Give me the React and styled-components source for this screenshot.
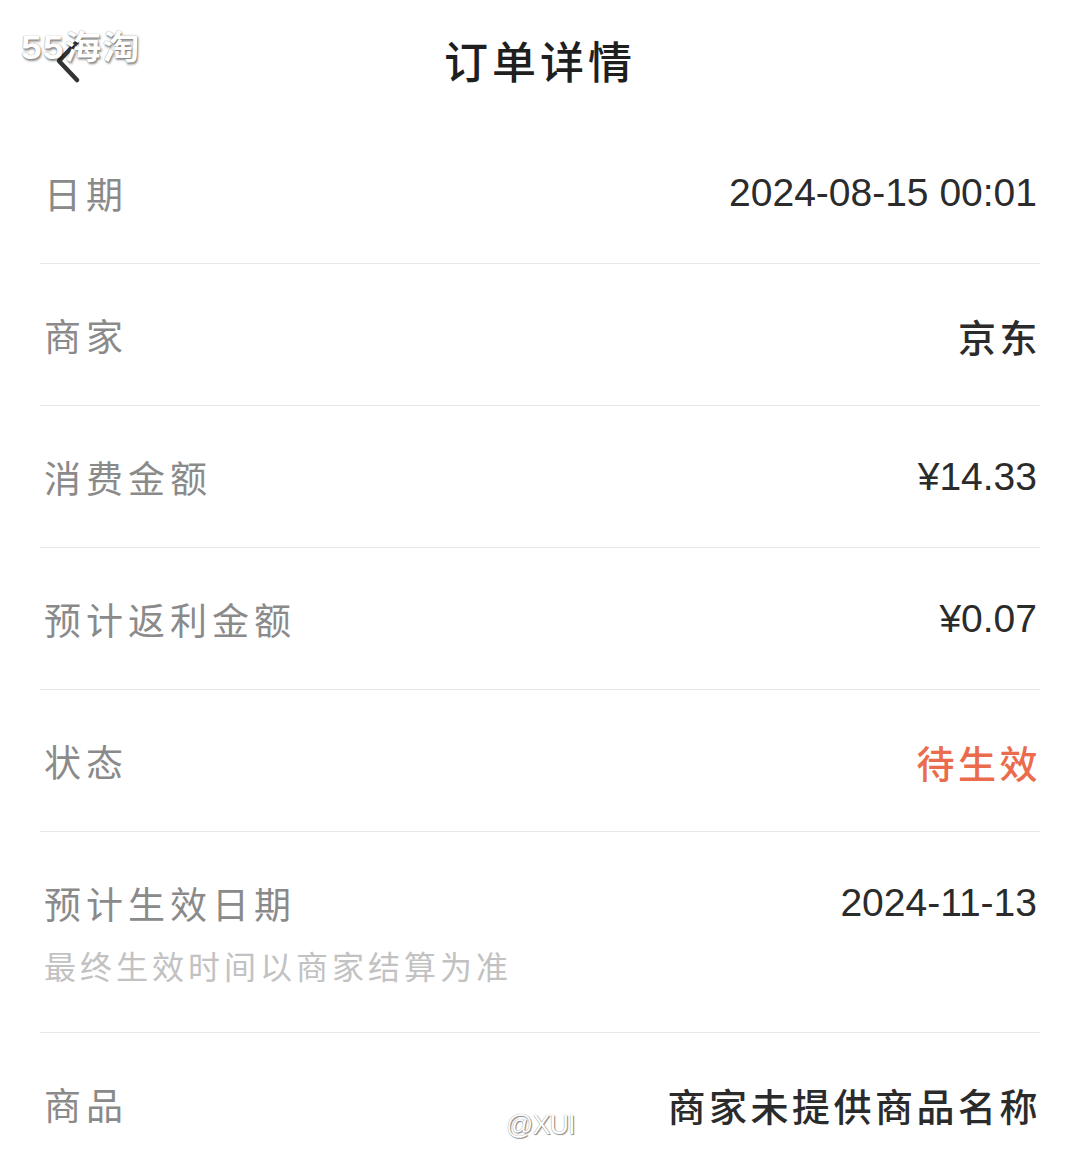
import React from 'react';
import styled, { createGlobalStyle } from 'styled-components';

const GlobalStyle = createGlobalStyle`
  body {
    margin: 0;
    background: #fff;
    font-family: "Liberation Sans", "Noto Sans CJK SC", sans-serif;
  }
`;

const rows = [
  { label: '日期', value: '2024-08-15 00:01' },
  { label: '商家', value: '京东', cjk: true },
  { label: '消费金额', value: '¥14.33' },
  { label: '预计返利金额', value: '¥0.07' },
  { label: '状态', value: '待生效', tone: 'warn', cjk: true },
  { label: '预计生效日期', value: '2024-11-13', note: '最终生效时间以商家结算为准' },
  { label: '商品', value: '商家未提供商品名称', cjk: true, last: true },
];

const App = () => (
  <Page>
    <GlobalStyle />
    <Header>
      <BackButton aria-label="返回">
        <svg width="40" height="48" viewBox="0 0 40 48">
          <path d="M26 5 L8 24 L26 43" fill="none" stroke="#333" strokeWidth="4.5" strokeLinecap="round" strokeLinejoin="round" />
        </svg>
      </BackButton>
      <Title>订单详情</Title>
    </Header>
    <List>
      {rows.map(r => (
        <Row key={r.label} tall={!!r.note} last={r.last}>
          <Main>
            <Label>{r.label}</Label>
            <Value tone={r.tone} cjk={r.cjk}>{r.value}</Value>
          </Main>
          {r.note && <Note>{r.note}</Note>}
        </Row>
      ))}
    </List>
    <Mark>55海淘</Mark>
    <Credit>@XUI</Credit>
  </Page>
);

export default App;

const Page = styled.div`
  position: relative;
  width: 1080px;
  height: 1169px;
  overflow: hidden;
  background: #fff;
`;

const Header = styled.div`
  position: relative;
  height: 122px;
  display: flex;
  justify-content: center;
  align-items: flex-start;
`;

const BackButton = styled.div`
  position: absolute;
  left: 51px;
  top: 37px;
  display: flex;
`;

const Title = styled.div`
  margin-top: 30px;
  font-family: "Noto Sans CJK SC", sans-serif;
  font-size: 44px;
  font-weight: 500;
  letter-spacing: 4px;
  color: #1f1f1f;
  line-height: 60px;
`;

const List = styled.div`
  display: flex;
  flex-direction: column;
  padding: 0 40px;
`;

const Row = styled.div`
  height: ${p => (p.tall ? 201 : 142)}px;
  box-sizing: border-box;
  border-bottom: ${p => (p.last ? 'none' : '1.5px solid #e8e8e8')};
  display: flex;
  flex-direction: column;
  padding-top: 48px;
`;

const Main = styled.div`
  display: flex;
  justify-content: space-between;
  align-items: center;
  height: 46px;
`;

const Label = styled.div`
  padding-left: 4px;
  font-family: "Noto Sans CJK SC", sans-serif;
  font-size: 37px;
  letter-spacing: 5px;
  color: #8a8a8a;
`;

const Value = styled.div`
  font-family: ${p => (p.cjk ? '"Noto Sans CJK SC", sans-serif' : '"Liberation Sans", sans-serif')};
  font-size: ${p => (p.cjk ? 38 : 39)}px;
  letter-spacing: ${p => (p.cjk ? 3.5 : 0)}px;
  color: ${p => (p.tone === 'warn' ? '#ea6c4c' : '#2b2b2b')};
  font-weight: ${p => (p.cjk ? 500 : 400)};
  margin-right: ${p => (p.cjk ? -1 : 3)}px;
`;

const Note = styled.div`
  margin-top: 16px;
  padding-left: 4px;
  font-family: "Noto Sans CJK SC", sans-serif;
  font-size: 32px;
  letter-spacing: 4px;
  color: #c2c2c2;
`;

const Mark = styled.div`
  position: absolute;
  left: 21px;
  top: 21px;
  font-family: "Liberation Sans", "Noto Sans CJK SC", sans-serif;
  font-size: 33px;
  font-weight: 700;
  letter-spacing: 1px;
  transform: scaleX(1.12);
  transform-origin: left center;
  color: #fff;
  text-shadow: 1px 2px 2px rgba(0, 0, 0, 0.45), 0 0 1px rgba(0, 0, 0, 0.5);
`;

const Credit = styled.div`
  position: absolute;
  left: 506px;
  top: 1110px;
  font-family: "Liberation Sans", sans-serif;
  font-size: 27px;
  letter-spacing: -1px;
  color: #fff;
  text-shadow: 1px 1px 1px rgba(0, 0, 0, 0.45), 0 0 1px rgba(0, 0, 0, 0.5);
`;
